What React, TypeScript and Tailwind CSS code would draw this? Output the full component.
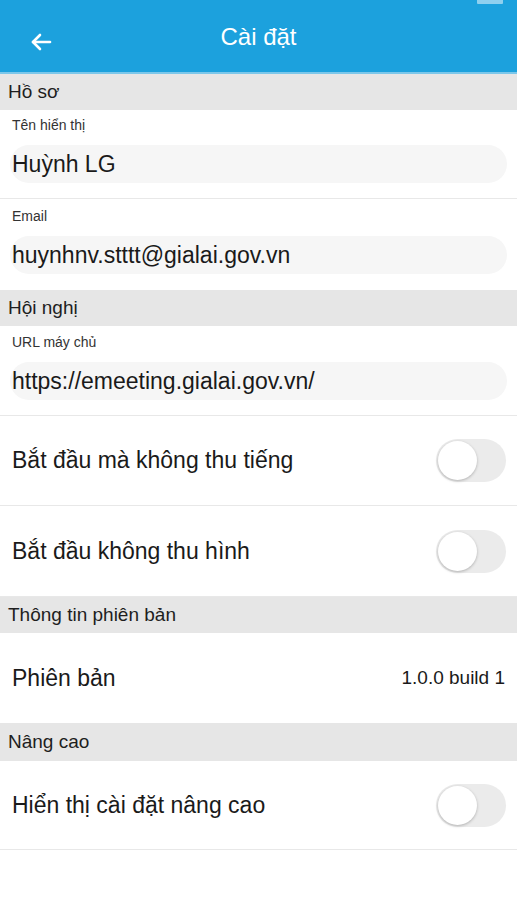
import React from "react";

const font = { fontFamily: '"Liberation Sans", Arial, sans-serif' };

const SectionHeader = ({ title, h = "h-[36px]" }: { title: string; h?: string }) => (
  <div className={`${h} shrink-0 bg-[#e6e6e6] flex items-center px-[8px] text-[19px] text-[#1e1e1e]`}>
    {title}
  </div>
);

const InputField = ({
  label,
  value,
  pad,
}: {
  label: string;
  value: string;
  pad: string;
}) => (
  <div className={pad}>
    <div className="px-[12px] text-[14px] text-[#333] leading-[20px]">{label}</div>
    <div className="mx-[10px] mt-[10px] h-[38px] rounded-[19px] bg-[#f6f6f6] flex items-center px-[2px] text-[23px] text-[#1a1a1a]">
      {value}
    </div>
  </div>
);

const Toggle = () => (
  <div className="w-[70px] h-[43px] rounded-full bg-[#ebebeb] p-[2px] flex items-center">
    <div className="w-[39px] h-[39px] rounded-full bg-white shadow-[0_1px_3px_rgba(0,0,0,0.25)]"></div>
  </div>
);

const SwitchRow = ({ label, h = "h-[90px]" }: { label: string; h?: string }) => (
  <div className={`${h} shrink-0 border-b border-[#e8e8e8] flex items-center justify-between pl-[12px] pr-[11px]`}>
    <span className="text-[23px] text-[#1a1a1a]">{label}</span>
    <Toggle />
  </div>
);

export default function App() {
  return (
    <div className="w-[517px] h-[900px] bg-white flex flex-col" style={font}>
      {/* Header */}
      <div className="h-[74px] shrink-0 bg-[#1ca1dd] border-b-[2px] border-[#7cc7ea] relative flex items-center justify-center">
        <div className="absolute top-0 right-[14px] w-[26px] h-[4px] bg-[#8fd0ef] rounded-b-[1px]"></div>
        <button className="absolute left-[28px] top-[29px] w-[26px] h-[26px] flex items-center justify-center">
          <svg width="24" height="24" viewBox="0 0 24 24" fill="none" stroke="white" strokeWidth="2.6" strokeLinecap="round" strokeLinejoin="round">
            <path d="M21 12H4" />
            <path d="M11 5l-7 7 7 7" />
          </svg>
        </button>
        <span className="text-white text-[24px] mt-[1px]">Cài đặt</span>
      </div>

      <SectionHeader title="Hồ sơ" />
      <InputField
        label="Tên hiển thị"
        value="Huỳnh LG"
        pad="border-b border-[#e8e8e8] pt-[5px] pb-[15px]"
      />
      <InputField label="Email" value="huynhnv.stttt@gialai.gov.vn" pad="pt-[7px] pb-[16px]" />

      <SectionHeader title="Hội nghị" />
      <InputField
        label="URL máy chủ"
        value="https://emeeting.gialai.gov.vn/"
        pad="border-b border-[#e8e8e8] pt-[6px] pb-[15px]"
      />
      <SwitchRow label="Bắt đầu mà không thu tiếng" />
      <SwitchRow label="Bắt đầu không thu hình" h="h-[91px]" />

      <SectionHeader title="Thông tin phiên bản" />
      <div className="h-[90px] shrink-0 flex items-center justify-between pl-[12px] pr-[12px]">
        <span className="text-[23px] text-[#1a1a1a]">Phiên bản</span>
        <span className="text-[19px] text-[#1a1a1a]">1.0.0 build 1</span>
      </div>

      <SectionHeader title="Nâng cao" h="h-[38px]" />
      <SwitchRow label="Hiển thị cài đặt nâng cao" h="h-[89px]" />
    </div>
  );
}
